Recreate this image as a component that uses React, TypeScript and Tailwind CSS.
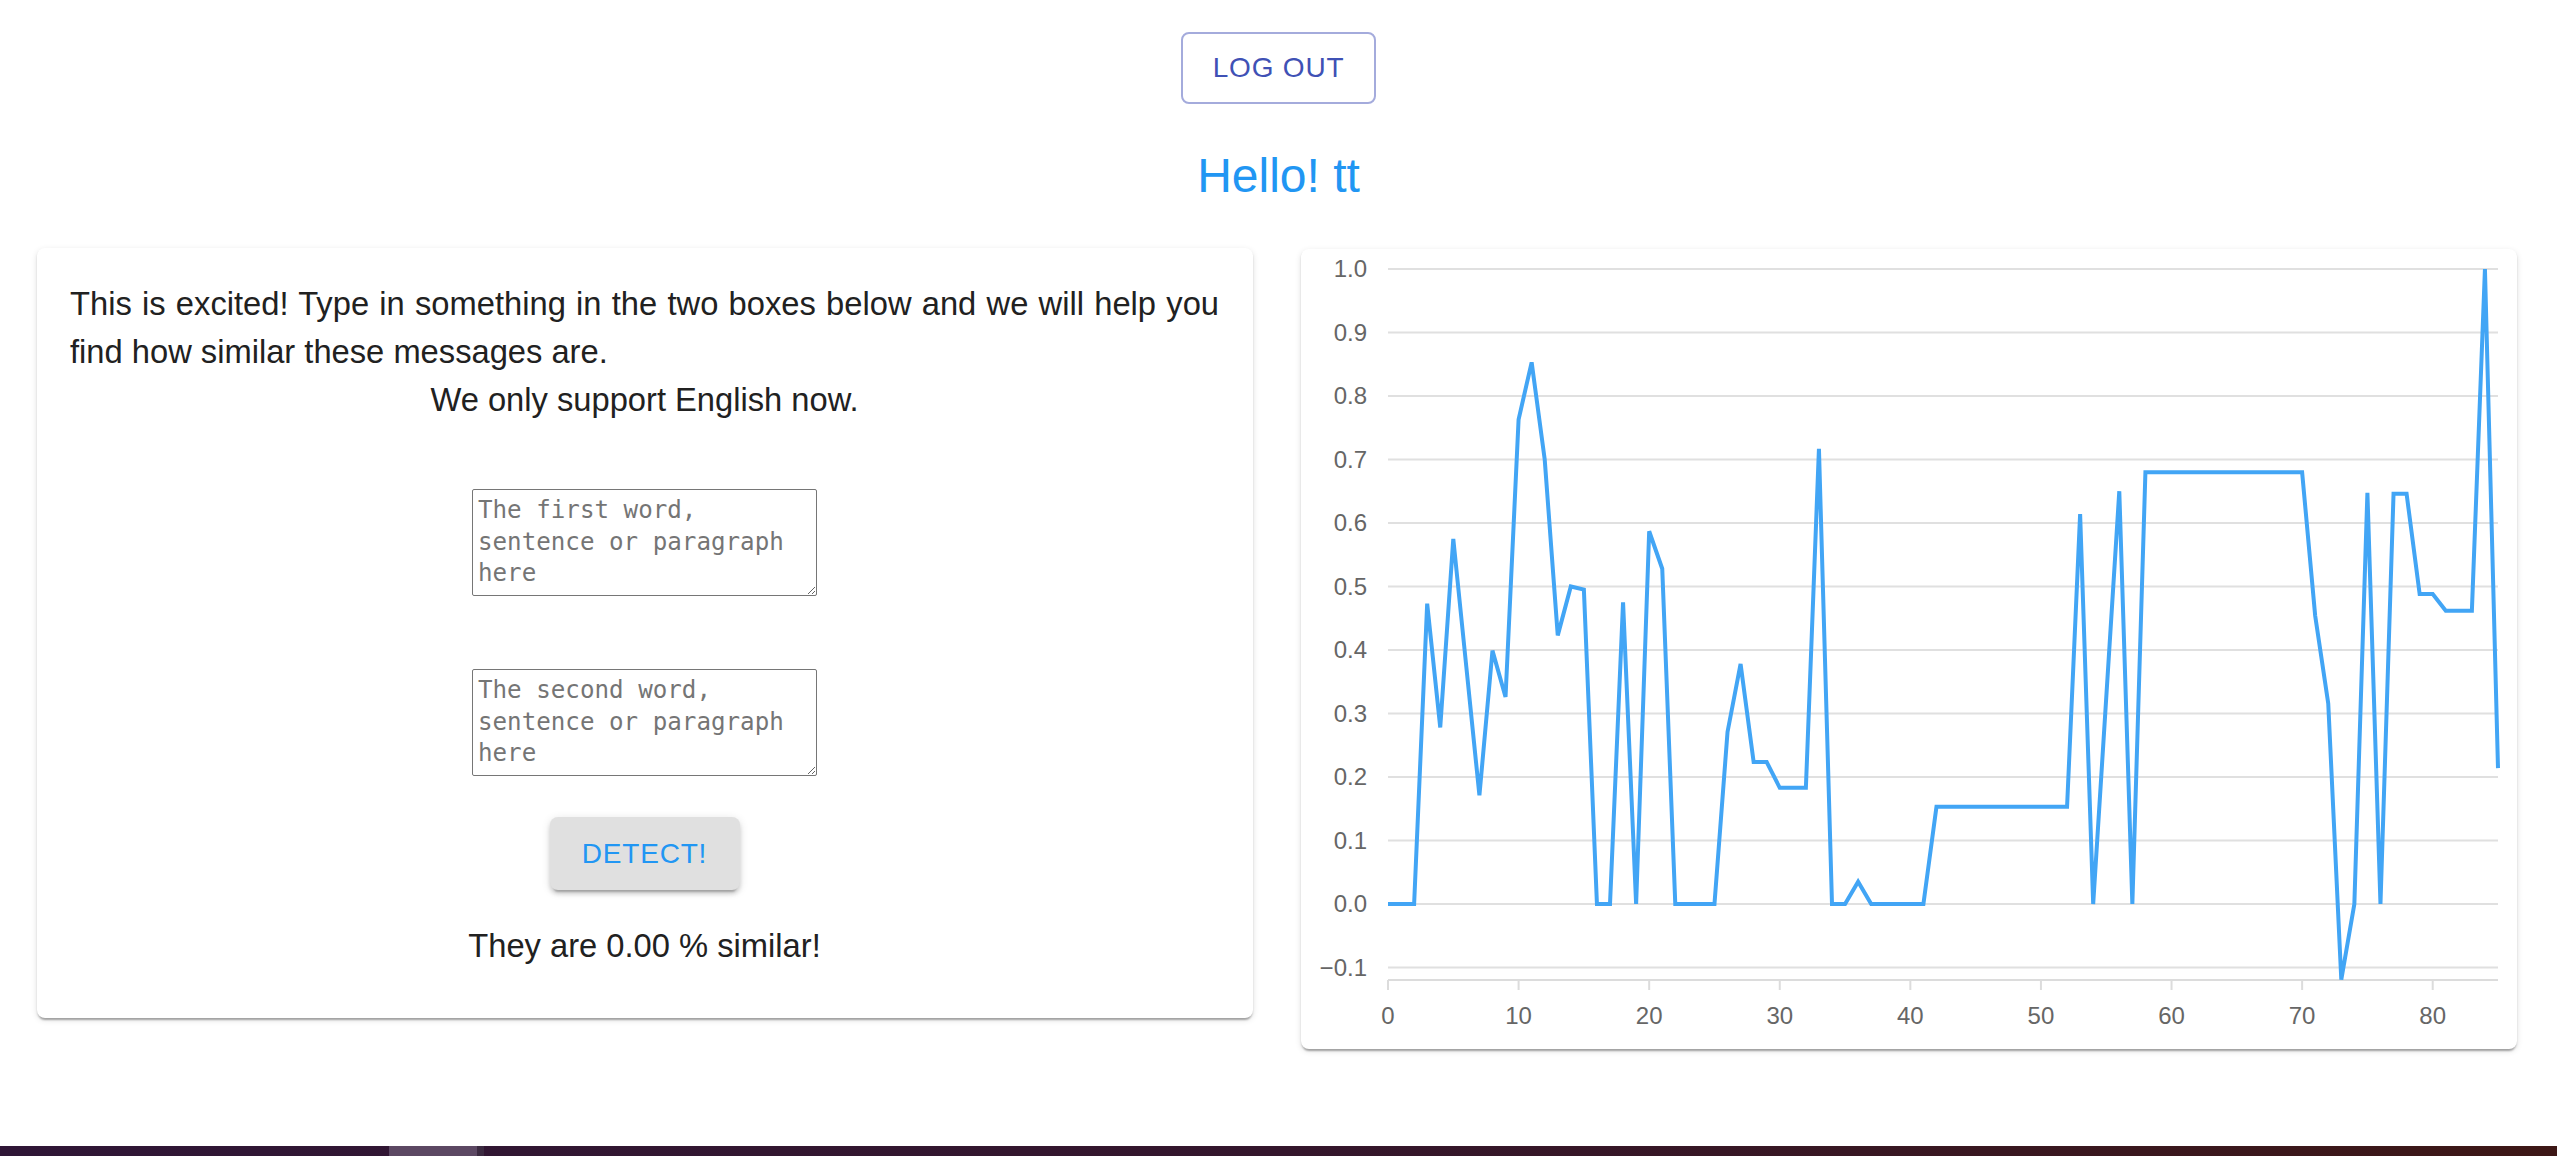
import React from "react";

const DATA: number[] = [
  0, 0, 0, 0.473, 0.278, 0.575, 0.373, 0.171, 0.399, 0.326,
  0.763, 0.853, 0.7, 0.423, 0.5, 0.495, 0, 0, 0.475, 0,
  0.587, 0.528, 0, 0, 0, 0, 0.271, 0.378, 0.2235, 0.2235,
  0.183, 0.183, 0.183, 0.717, 0, 0, 0.035, 0, 0, 0,
  0, 0, 0.153, 0.153, 0.153, 0.153, 0.153, 0.153, 0.153, 0.153,
  0.153, 0.153, 0.153, 0.614, 0, 0.325, 0.65, 0, 0.68, 0.68,
  0.68, 0.68, 0.68, 0.68, 0.68, 0.68, 0.68, 0.68, 0.68, 0.68,
  0.68, 0.454, 0.316, -0.119, 0, 0.6476, 0, 0.646, 0.646, 0.488,
  0.488, 0.462, 0.462, 0.462, 1.0, 0.214,
];

const X0 = 87;
const X1 = 1197;
const XS = (X1 - X0) / 85;
const Y0 = 655;
const YS = 635;
const yOf = (v: number) => Y0 - YS * v;
const xOf = (i: number) => X0 + XS * i;

function Chart() {
  const path = DATA.map((v, i) => `${i === 0 ? "M" : "L"}${xOf(i).toFixed(2)},${yOf(v).toFixed(2)}`).join(" ");
  const yTicks = [1.0, 0.9, 0.8, 0.7, 0.6, 0.5, 0.4, 0.3, 0.2, 0.1, 0.0, -0.1];
  const xTicks = [0, 10, 20, 30, 40, 50, 60, 70, 80];
  const axisY = 731;
  return (
    <svg width={1216} height={800} viewBox="0 0 1216 800" className="block">
      {yTicks.map((t) => (
        <line key={"g" + t} x1={X0} x2={X1} y1={yOf(t)} y2={yOf(t)} stroke="#e0e0e0" strokeWidth={2} />
      ))}
      <line x1={X0} x2={X1} y1={axisY} y2={axisY} stroke="#dcdcdc" strokeWidth={2} />
      {xTicks.map((t) => (
        <line key={"t" + t} x1={xOf(t)} x2={xOf(t)} y1={axisY} y2={axisY + 10} stroke="#dcdcdc" strokeWidth={2} />
      ))}
      {yTicks.map((t) => (
        <text
          key={"yl" + t}
          x={66}
          y={yOf(t) + 8}
          textAnchor="end"
          fontSize={24}
          fill="#666666"
          fontFamily="Liberation Sans, Arial, sans-serif"
        >
          {t < 0 ? "\u2212" + Math.abs(t).toFixed(1) : t.toFixed(1)}
        </text>
      ))}
      {xTicks.map((t) => (
        <text
          key={"xl" + t}
          x={xOf(t)}
          y={775}
          textAnchor="middle"
          fontSize={24}
          fill="#666666"
          fontFamily="Liberation Sans, Arial, sans-serif"
        >
          {t}
        </text>
      ))}
      <path d={path} fill="none" stroke="#42a5f5" strokeWidth={4} />
    </svg>
  );
}

export default function App() {
  const cardShadow =
    "shadow-[0_4px_2px_-2px_rgba(0,0,0,0.2),0_2px_2px_0_rgba(0,0,0,0.14),0_2px_6px_0_rgba(0,0,0,0.12)]";
  return (
    <div className="min-h-[1156px] flex flex-col bg-white font-['Liberation_Sans',Arial,sans-serif]">
      <div className="flex justify-center pt-[32px]">
        <button className="w-[195px] h-[72px] border-2 border-[#a4abdc] rounded-[8px] text-[28px] tracking-[0.8px] text-[#3f51b5] uppercase leading-none">
          Log out
        </button>
      </div>
      <h5 className="mt-[40px] text-center text-[48px] leading-[64px] text-[#2196f3] font-normal">Hello! tt</h5>
      <div className="mt-[40px] flex items-start gap-[48px] pl-[37px]">
        <div className={`w-[1216px] bg-white rounded-[8px] ${cardShadow} pl-[33px] pr-[34px] pt-[32px] pb-[48px] text-[#212121]`}>
          <p className="text-[32.7px] leading-[48px] text-justify">
            This is excited! Type in something in the two boxes below and we will help you find how similar these
            messages are.
          </p>
          <p className="text-[32.7px] leading-[48px] text-center">We only support English now.</p>
          <div className="flex flex-col items-center">
            <textarea
              placeholder="The first word, sentence or paragraph here"
              className="mt-[65px] block w-[345px] h-[107px] border border-[#767676] rounded-[2px] px-[5px] py-[5px] font-['DejaVu_Sans_Mono',monospace] text-[24.2px] leading-[31.7px] text-[#333] placeholder:text-[#757575] resize overflow-hidden"
            />
            <textarea
              placeholder="The second word, sentence or paragraph here"
              className="mt-[73px] block w-[345px] h-[107px] border border-[#767676] rounded-[2px] px-[5px] py-[5px] font-['DejaVu_Sans_Mono',monospace] text-[24.2px] leading-[31.7px] text-[#333] placeholder:text-[#757575] resize overflow-hidden"
            />
            <button className="mt-[41px] w-[190px] h-[73px] rounded-[8px] bg-[#e0e0e0] text-[28px] tracking-[0.8px] text-[#2196f3] uppercase leading-none shadow-[0_6px_2px_-4px_rgba(0,0,0,0.2),0_4px_4px_0_rgba(0,0,0,0.14),0_2px_10px_0_rgba(0,0,0,0.12)]">
              Detect!
            </button>
            <p className="mt-[32px] text-[32.7px] leading-[48px] text-center">They are 0.00 % similar!</p>
          </div>
        </div>
        <div className={`w-[1216px] bg-white rounded-[8px] ${cardShadow} mt-[1px]`}>
          <Chart />
        </div>
      </div>
      <div className="mt-auto h-[10px] flex bg-gradient-to-r from-[#2f1636] via-[#34162c] to-[#3d1716]">
        <div className="w-[389px]" />
        <div className="w-[88px] bg-[#5c4863]" />
        <div className="w-[7px] bg-[#3b2a40]" />
      </div>
    </div>
  );
}
